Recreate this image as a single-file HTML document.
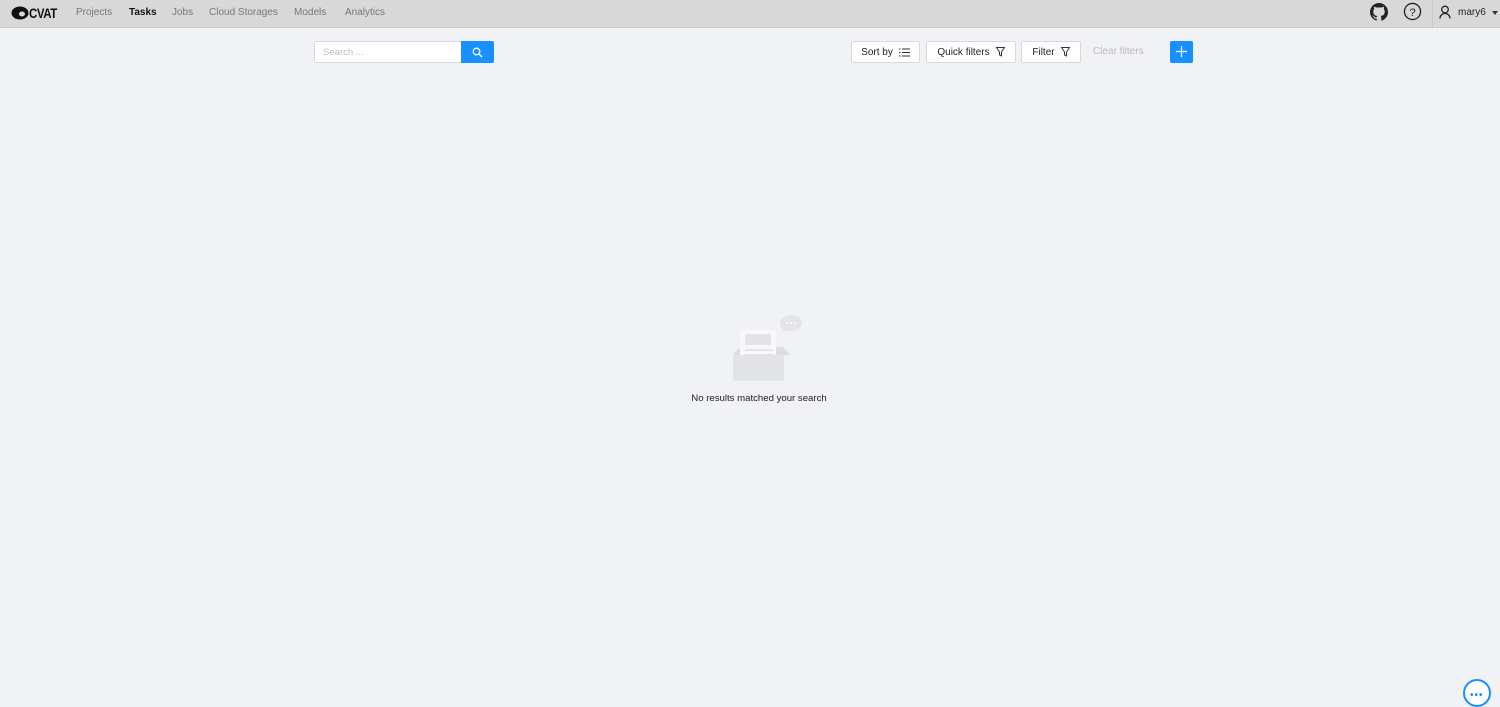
<!DOCTYPE html>
<html><head><meta charset="utf-8"><style>
*{box-sizing:border-box;margin:0;padding:0}
body{width:1500px;height:696px;overflow:hidden;background:#f1f2f5;font-family:"Liberation Sans",sans-serif;font-size:10px;color:#000;position:relative}
.hdr{position:absolute;left:0;top:0;width:1500px;height:28px;background:#d8d8d8;border-bottom:1px solid #ccc}
.nav{position:absolute;top:7px;font-size:10px;color:#777}
.btn{position:absolute;top:41px;height:22px;background:#fff;border:1px solid #d9d9d9;border-radius:2px;font-size:10px;color:#222;display:flex;align-items:center;justify-content:center;gap:6px}
</style></head><body>
<div class="hdr">
<svg style="position:absolute;left:11px;top:6px" width="18" height="14" viewBox="0 0 18 14"><ellipse cx="9" cy="7" rx="8.5" ry="6.5" fill="#111"/><ellipse cx="11" cy="8" rx="3" ry="2.5" fill="#d8d8d8"/></svg>
<div style="position:absolute;left:29px;top:5px;font-size:14px;font-weight:bold;letter-spacing:-0.5px;color:#111;transform:scaleX(0.82);transform-origin:left">CVAT</div>
<div class="nav" style="left:76px">Projects</div>
<div class="nav" style="left:129px;color:#111;font-weight:bold">Tasks</div>
<div class="nav" style="left:172px">Jobs</div>
<div class="nav" style="left:209px">Cloud Storages</div>
<div class="nav" style="left:294px">Models</div>
<div class="nav" style="left:345px">Analytics</div>
<svg style="position:absolute;left:1370px;top:3px" width="18" height="18" viewBox="0 0 16 16"><path fill="#222" d="M8 0C3.58 0 0 3.58 0 8c0 3.54 2.29 6.530 5.470 7.59.4.07.55-.17.55-.38v-1.34c-2.23.48-2.7-1.07-2.7-1.07-.36-.92-.89-1.170-.89-1.17-.73-.5.05-.49.05-.49.8.06 1.23.83 1.23.83.71 1.22 1.87.87 2.33.66.07-.52.28-.87.51-1.07-1.78-.2-3.64-.89-3.64-3.95 0-.87.31-1.59.82-2.15-.08-.2-.36-1.02.08-2.12 0 0 .67-.21 2.2.82a7.6 7.6 0 014 0c1.53-1.04 2.2-.82 2.2-.82.44 1.1.16 1.92.08 2.12.51.56.82 1.27.82 2.15 0 3.07-1.87 3.75-3.65 3.95.29.25.54.73.54 1.48v2.2c0 .21.15.46.55.38A8.01 8.01 0 0016 8c0-4.42-3.580-8-8-8z"/></svg>
<svg style="position:absolute;left:1403px;top:2px" width="19" height="19" viewBox="0 0 20 20"><circle cx="10" cy="10" r="8.5" fill="none" stroke="#222" stroke-width="1.4"/><text x="10" y="14.5" font-size="12" text-anchor="middle" fill="#222" font-family="Liberation Sans">?</text></svg>
<div style="position:absolute;left:1432px;top:0;width:1px;height:28px;background:#c8c8c8"></div>
<svg style="position:absolute;left:1439px;top:5px" width="12" height="14" viewBox="0 0 12 14"><circle cx="6" cy="4.5" r="3.3" fill="none" stroke="#222" stroke-width="1.3"/><path d="M1 13.5c0-3 2.2-5 5-5s5 2 5 5" fill="none" stroke="#222" stroke-width="1.3"/></svg>
<div style="position:absolute;left:1458px;top:7px;font-size:10px;color:#222">mary6</div>
<div style="position:absolute;left:1492px;top:11px;border:3px solid transparent;border-top:4px solid #333"></div>
</div>

<div style="position:absolute;left:314px;top:41px;width:148px;height:22px;background:#fff;border:1px solid #d9d9d9;border-radius:2px 0 0 2px;padding:5px 8px;color:#bbb;font-size:9.5px">Search ...</div>
<div style="position:absolute;left:461px;top:41px;width:33px;height:22px;background:#1890ff;border-radius:0 2px 2px 0"><svg style="position:absolute;left:11px;top:6px" width="11" height="11" viewBox="0 0 11 11"><circle cx="4.5" cy="4.5" r="3.3" fill="none" stroke="#fff" stroke-width="1.3"/><path d="M7 7l3 3" stroke="#fff" stroke-width="1.4"/></svg></div>

<div class="btn" style="left:851px;width:69px">Sort by <svg width="11" height="9" viewBox="0 0 11 9"><path d="M0 1h1.5M0 4.5h1.5M0 8h1.5M3 1h8M3 4.5h8M3 8h8" stroke="#333" stroke-width="1"/></svg></div>
<div class="btn" style="left:926px;width:90px">Quick filters <svg width="9" height="10" viewBox="0 0 9 10"><path d="M.5.5h8L5.5 5v4l-2-1V5z" fill="none" stroke="#333"/></svg></div>
<div class="btn" style="left:1021px;width:60px">Filter <svg width="9" height="10" viewBox="0 0 9 10"><path d="M.5.5h8L5.5 5v4l-2-1V5z" fill="none" stroke="#333"/></svg></div>
<div style="position:absolute;left:1093px;top:46px;color:#bbb;font-size:10px">Clear filters</div>
<div style="position:absolute;left:1170px;top:41px;width:23px;height:22px;background:#1890ff;border-radius:2px"><svg style="position:absolute;left:6px;top:5px" width="11" height="11"><path d="M5.5 0v11M0 5.5h11" stroke="#fff" stroke-width="1.3"/></svg></div>

<svg style="position:absolute;left:730px;top:313px" width="76" height="70" viewBox="0 0 76 70">
<path d="M3 42l7-8h43l7 8z" fill="#dcdde1"/>
<rect x="10" y="17" width="36" height="38" fill="#f8f8f9"/>
<rect x="15" y="21" width="26" height="11" fill="#e3e4e7"/>
<rect x="15" y="36" width="28" height="2" fill="#e3e4e7"/>
<rect x="15" y="41" width="28" height="2" fill="#e3e4e7"/>
<path d="M3 42h51v24a2 2 0 01-2 2H5a2 2 0 01-2-2z" fill="#e3e4e7"/>
<path d="M3 42h13l4 11h17l4-11h13" fill="none" stroke="#dcdde1" stroke-width="0"/>
<ellipse cx="61" cy="10" rx="11" ry="8" fill="#e3e4e7"/>
<path d="M54 15l-3 5 7-3z" fill="#e3e4e7"/>
<circle cx="57" cy="10" r="1" fill="#fff"/><circle cx="61" cy="10" r="1" fill="#fff"/><circle cx="65" cy="10" r="1" fill="#fff"/>
</svg>
<div style="position:absolute;left:0;width:1518px;top:393px;text-align:center;font-size:9.6px;color:#222">No results matched your search</div>

<div style="position:absolute;left:1463px;top:679px;width:28px;height:28px;border:2px solid #1890ff;border-radius:50%;background:#fff"></div>
<div style="position:absolute;left:1470px;top:690px;font-size:10px;color:#1890ff;font-weight:bold;letter-spacing:1px">•••</div>
</body></html>
